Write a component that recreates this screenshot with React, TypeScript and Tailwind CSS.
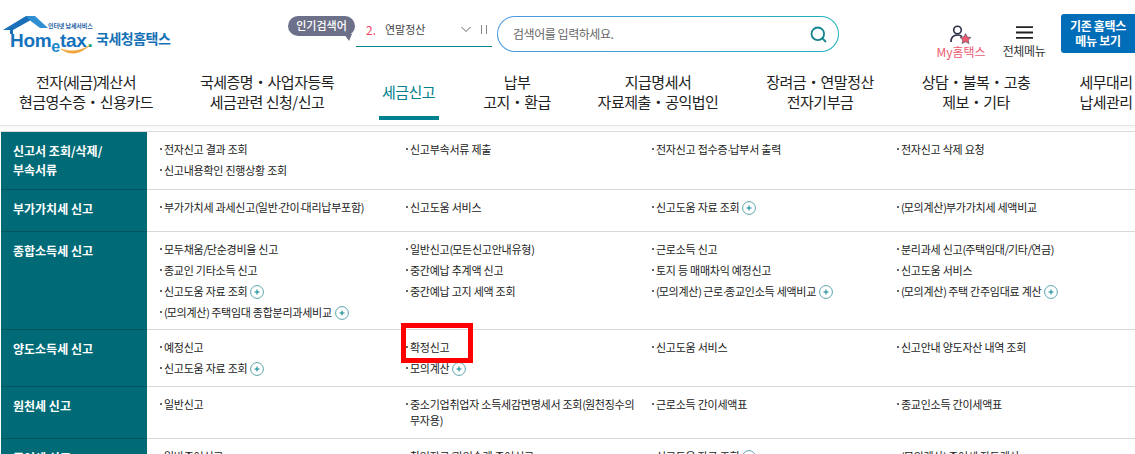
import React from "react";

const F = { fontFamily: '"Noto Sans CJK KR", "Noto Sans", sans-serif' };

function Plus() {
  return (
    <svg width="14" height="14" viewBox="0 0 14 14" className="inline-block ml-[3px] align-[-3px]">
      <circle cx="7" cy="7" r="6.4" fill="#fff" stroke="#5ba3ad" strokeWidth="1" />
      <path d="M7 4.5v5M4.5 7h5" stroke="#00818f" strokeWidth="1" />
    </svg>
  );
}

function Dotted({ t }: { t: string }) {
  const parts = t.split(/([·/()])/);
  return (
    <>
      {parts.map((p, i) =>
        p === "·" ? (
          <span key={i} className="tracking-[-1.5px]" style={{ fontFamily: '"Liberation Sans", sans-serif' }}>·</span>
        ) : p === "/" || p === "(" || p === ")" ? (
          <span key={i} className="tracking-[-1px]">{p}</span>
        ) : (
          <React.Fragment key={i}>{p}</React.Fragment>
        )
      )}
    </>
  );
}

function NavText({ t }: { t: string }) {
  const parts = t.split(/([·()])/);
  return (
    <>
      {parts.map((p, i) =>
        p === "·" ? (
          <span key={i} className="font-black">·</span>
        ) : p === "(" || p === ")" ? (
          <span key={i} className="tracking-[-1.7px]">{p}</span>
        ) : (
          <React.Fragment key={i}>{p}</React.Fragment>
        )
      )}
    </>
  );
}

function Item({ t, plus }: { t: string; plus?: boolean }) {
  return (
    <div className="relative pl-[5px] max-w-[235px] leading-[16px] text-[11px] tracking-[-0.25px] text-[#222]">
      <span className="absolute left-[1px] top-[7px] w-[2px] h-[2px] bg-[#666]" />
      <Dotted t={t} />
      {plus && <Plus />}
    </div>
  );
}

type It = { t: string; plus?: boolean };
function Row({ title, h, cols }: { title: React.ReactNode; h: string; cols: It[][] }) {
  return (
    <div className={"flex border-b border-[#d9d9d9] " + h}>
      <div className="w-[146px] shrink-0 bg-[#006b77] border-b border-[#00545e] -mb-px pl-[12px] pt-[9px] text-[12px] font-bold leading-[19px] text-white">
        {title}
      </div>
      <div className="flex-1 flex pl-[12px] pt-[9px]">
        {cols.map((c, i) => (
          <div key={i} className={"flex flex-col gap-[5px] shrink-0 " + (i === 0 ? "w-[246px]" : i === 1 ? "w-[246px]" : i === 2 ? "w-[245px]" : "w-[236px]")}>
            {c.map((x) => (
              <Item key={x.t} t={x.t} plus={x.plus} />
            ))}
          </div>
        ))}
      </div>
    </div>
  );
}

function Nav({ a, b, w, active }: { a: string; b?: string; w: string; active?: boolean }) {
  return (
    <div className={"relative shrink-0 flex flex-col items-center text-center text-[15px] tracking-[-0.5px] leading-[20px] text-[#222] h-[57px] pt-[4px] " + w}>
      {active ? (
        <div className="text-[#00818f] mt-[10px]">{a}</div>
      ) : (
        <>
          <div className="whitespace-nowrap"><NavText t={a} /></div>
          <div className="whitespace-nowrap"><NavText t={b ?? ""} /></div>
        </>
      )}
      {active && <div className="absolute bottom-[5px] left-1/2 -translate-x-1/2 w-[60px] h-[4px] bg-[#00818f]" />}
    </div>
  );
}

function Logo() {
  return (
    <div className="relative w-[172px] h-[44px] ml-[2px] shrink-0">
      <svg width="92" height="44" viewBox="0 0 92 44" className="absolute left-0 top-0">
        <path d="M1 16 L24 2 H30 L28 6.5 L11 16 V20 H8 V16Z" fill="#1b6fb8" />
        <path d="M24 2 H33 L46 14 H38 L28 6.5Z" fill="#2f8fd0" />
        <path d="M59 35 Q72 45 87 32 Q73 40 59 35Z" fill="#f0a63c" stroke="#f0a63c" strokeWidth=".6" />
      </svg>
      <div className="absolute left-[8px] top-[17px] flex items-baseline text-[#1572bc] font-bold text-[19px] leading-[19px] tracking-[-0.3px]" style={{ fontFamily: '"Liberation Sans", sans-serif' }}>
        Hom<span className="text-[16px] relative top-[5px] text-[#1a87cc]">e</span>tax<span className="text-[#16a05a] ml-px">.</span>
      </div>
      <div className="absolute left-[46px] top-[8px] text-[6px] font-bold leading-[8px] tracking-[-0.1px] text-[#1b5ea5] whitespace-nowrap">인터넷 납세서비스</div>
      <div className="absolute left-[94px] top-[15px] text-[14px] font-bold leading-[18px] tracking-[-0.5px] text-[#1571b5] whitespace-nowrap">국세청홈택스</div>
    </div>
  );
}

export default function App() {
  return (
    <div className="relative w-[1135px] h-[454px] overflow-hidden bg-white" style={F}>
      {/* header */}
      <div className="flex h-[68px] items-start pt-[14px]">
        <Logo />
        <div className="relative ml-[114px] mt-[2px] w-[67px] h-[20px] rounded-[10px] bg-[#6d7089] text-white text-[11px] font-medium leading-[19px] text-center shrink-0">
          인기검색어
          <svg width="8" height="7" viewBox="0 0 8 7" className="absolute right-[3px] top-[18px]"><path d="M0 0H8L5 7Z" fill="#6d7089" /></svg>
        </div>
        <div className="flex items-center w-[136px] h-[33px] ml-[1px] pb-[1px] border-b border-[#00818f] text-[11px] shrink-0 text-[#444] whitespace-nowrap">
          <span className="ml-[10px] text-[12px] text-[#f0475e]">2.</span>
          <span className="ml-[9px]">연말정산</span>
          <svg width="12" height="7" viewBox="0 0 12 7" className="ml-[35px] shrink-0"><path d="M1.5 1 L6 5.5 L10.5 1" fill="none" stroke="#666" strokeWidth="1" /></svg>
          <svg width="8" height="9" viewBox="0 0 8 9" className="ml-[8px] shrink-0"><path d="M1.5 0v9M6.5 0v9" stroke="#888" strokeWidth="1" /></svg>
        </div>
        <div className="ml-[5px] mt-[2px] p-px rounded-[18px] w-[342px] h-[36px] bg-gradient-to-r from-[#4a97e0] to-[#1db0bd] shrink-0">
          <div className="flex items-center h-full rounded-[17px] bg-white pl-[15px] pr-[11px] text-[12px] tracking-[-0.45px] text-[#666]">
            <span className="flex-1">검색어를 입력하세요.</span>
            <svg width="17" height="17" viewBox="0 0 17 17"><circle cx="7.8" cy="7.8" r="6.3" fill="none" stroke="#15838f" strokeWidth="1.8" /><path d="M12.2 12.2 L16 16" stroke="#15838f" strokeWidth="1.8" /></svg>
          </div>
        </div>
        <div className="ml-[97px] flex flex-col items-center w-[50px] mt-[11px] shrink-0">
          <svg width="22" height="19" viewBox="0 0 22 19">
            <circle cx="7.5" cy="5" r="3.8" fill="none" stroke="#2a2f45" strokeWidth="1.6" />
            <path d="M1 17c0-4 2-7 6.5-7 2 0 3.5.6 4.5 1.6" fill="none" stroke="#2a2f45" strokeWidth="1.6" />
            <path d="M15.5 8.5 L17.2 12 L21 12.4 L18.2 15 L19 18.6 L15.5 16.8 L12 18.6 L12.8 15 L10 12.4 L13.8 12Z" fill="#ee5a6f" stroke="#2a2f45" strokeWidth=".5" />
          </svg>
          <div className="text-[12px] leading-[14px] mt-[1px] text-[#ee5a6f] whitespace-nowrap">My홈택스</div>
        </div>
        <div className="ml-[17px] flex flex-col items-center w-[42px] mt-[12px] shrink-0">
          <svg width="17" height="13" viewBox="0 0 17 13"><path d="M0 1.2H17M0 6.5H17M0 11.8H17" stroke="#222" strokeWidth="1.8" /></svg>
          <div className="text-[12px] leading-[14px] mt-[5px] tracking-[-0.4px] text-[#333] whitespace-nowrap">전체메뉴</div>
        </div>
        <div className="ml-[16px] w-[74px] h-[39px] rounded-l-[3px] bg-[#006db8] text-white text-[12px] tracking-[-0.3px] font-bold leading-[15px] text-center pt-[4px] shrink-0 whitespace-nowrap">
          기존 홈택스<br />메뉴 보기
        </div>
      </div>
      {/* nav */}
      <div className="flex h-[58px] border-b border-[#e6e6e6]">
        <Nav w="w-[172px]" a="전자(세금)계산서" b="현금영수증 · 신용카드" />
        <Nav w="w-[190px]" a="국세증명 · 사업자등록" b="세금관련 신청/신고" />
        <Nav w="w-[93px]" a="세금신고" active />
        <Nav w="w-[124px]" a="납부" b="고지 · 환급" />
        <Nav w="w-[158px]" a="지급명세서" b="자료제출 · 공익법인" />
        <Nav w="w-[166px]" a="장려금 · 연말정산" b="전자기부금" />
        <Nav w="w-[146px]" a="상담 · 불복 · 고충" b="제보 · 기타" />
        <Nav w="w-[114px]" a="세무대리" b="납세관리" />
      </div>
      <div className="h-[5px] bg-gradient-to-b from-[#f7f7f7] to-white" />
      {/* table */}
      <div className="border-t border-[#d9d9d9] ml-[1px]">
        <Row h="h-[58px]" title={<>신고서 조회/삭제/<br />부속서류</>} cols={[
          [{ t: "전자신고 결과 조회" }, { t: "신고내용확인 진행상황 조회" }],
          [{ t: "신고부속서류 제출" }],
          [{ t: "전자신고 접수증·납부서 출력" }],
          [{ t: "전자신고 삭제 요청" }],
        ]} />
        <Row h="h-[42px]" title="부가가치세 신고" cols={[
          [{ t: "부가가치세 과세신고(일반·간이·대리납부포함)" }],
          [{ t: "신고도움 서비스" }],
          [{ t: "신고도움 자료 조회", plus: true }],
          [{ t: "(모의계산)부가가치세 세액비교" }],
        ]} />
        <Row h="h-[98px]" title="종합소득세 신고" cols={[
          [{ t: "모두채움/단순경비율 신고" }, { t: "종교인 기타소득 신고" }, { t: "신고도움 자료 조회", plus: true }, { t: "(모의계산) 주택임대 종합분리과세비교", plus: true }],
          [{ t: "일반신고(모든신고안내유형)" }, { t: "중간예납 추계액 신고" }, { t: "중간예납 고지 세액 조회" }],
          [{ t: "근로소득 신고" }, { t: "토지 등 매매차익 예정신고" }, { t: "(모의계산) 근로·종교인소득 세액비교", plus: true }],
          [{ t: "분리과세 신고(주택임대/기타/연금)" }, { t: "신고도움 서비스" }, { t: "(모의계산) 주택 간주임대료 계산", plus: true }],
        ]} />
        <Row h="h-[57px]" title="양도소득세 신고" cols={[
          [{ t: "예정신고" }, { t: "신고도움 자료 조회", plus: true }],
          [{ t: "확정신고" }, { t: "모의계산", plus: true }],
          [{ t: "신고도움 서비스" }],
          [{ t: "신고안내 양도자산 내역 조회" }],
        ]} />
        <Row h="h-[52px]" title="원천세 신고" cols={[
          [{ t: "일반신고" }],
          [{ t: "중소기업취업자 소득세감면명세서 조회(원천징수의 무자용)" }],
          [{ t: "근로소득 간이세액표" }],
          [{ t: "종교인소득 간이세액표" }],
        ]} />
        <Row h="h-[52px]" title="증여세 신고" cols={[
          [{ t: "일반증여신고" }],
          [{ t: "창업자금/가업승계 증여신고" }],
          [{ t: "신고도움 자료 조회", plus: true }],
          [{ t: "(모의계산) 증여세 자동계산" }],
        ]} />
      </div>
      {/* annotation drawn over the page */}
      <div className="absolute left-[401px] top-[323px] w-[72px] h-[40px] border-[5px] border-[#ff0000]" />
    </div>
  );
}
